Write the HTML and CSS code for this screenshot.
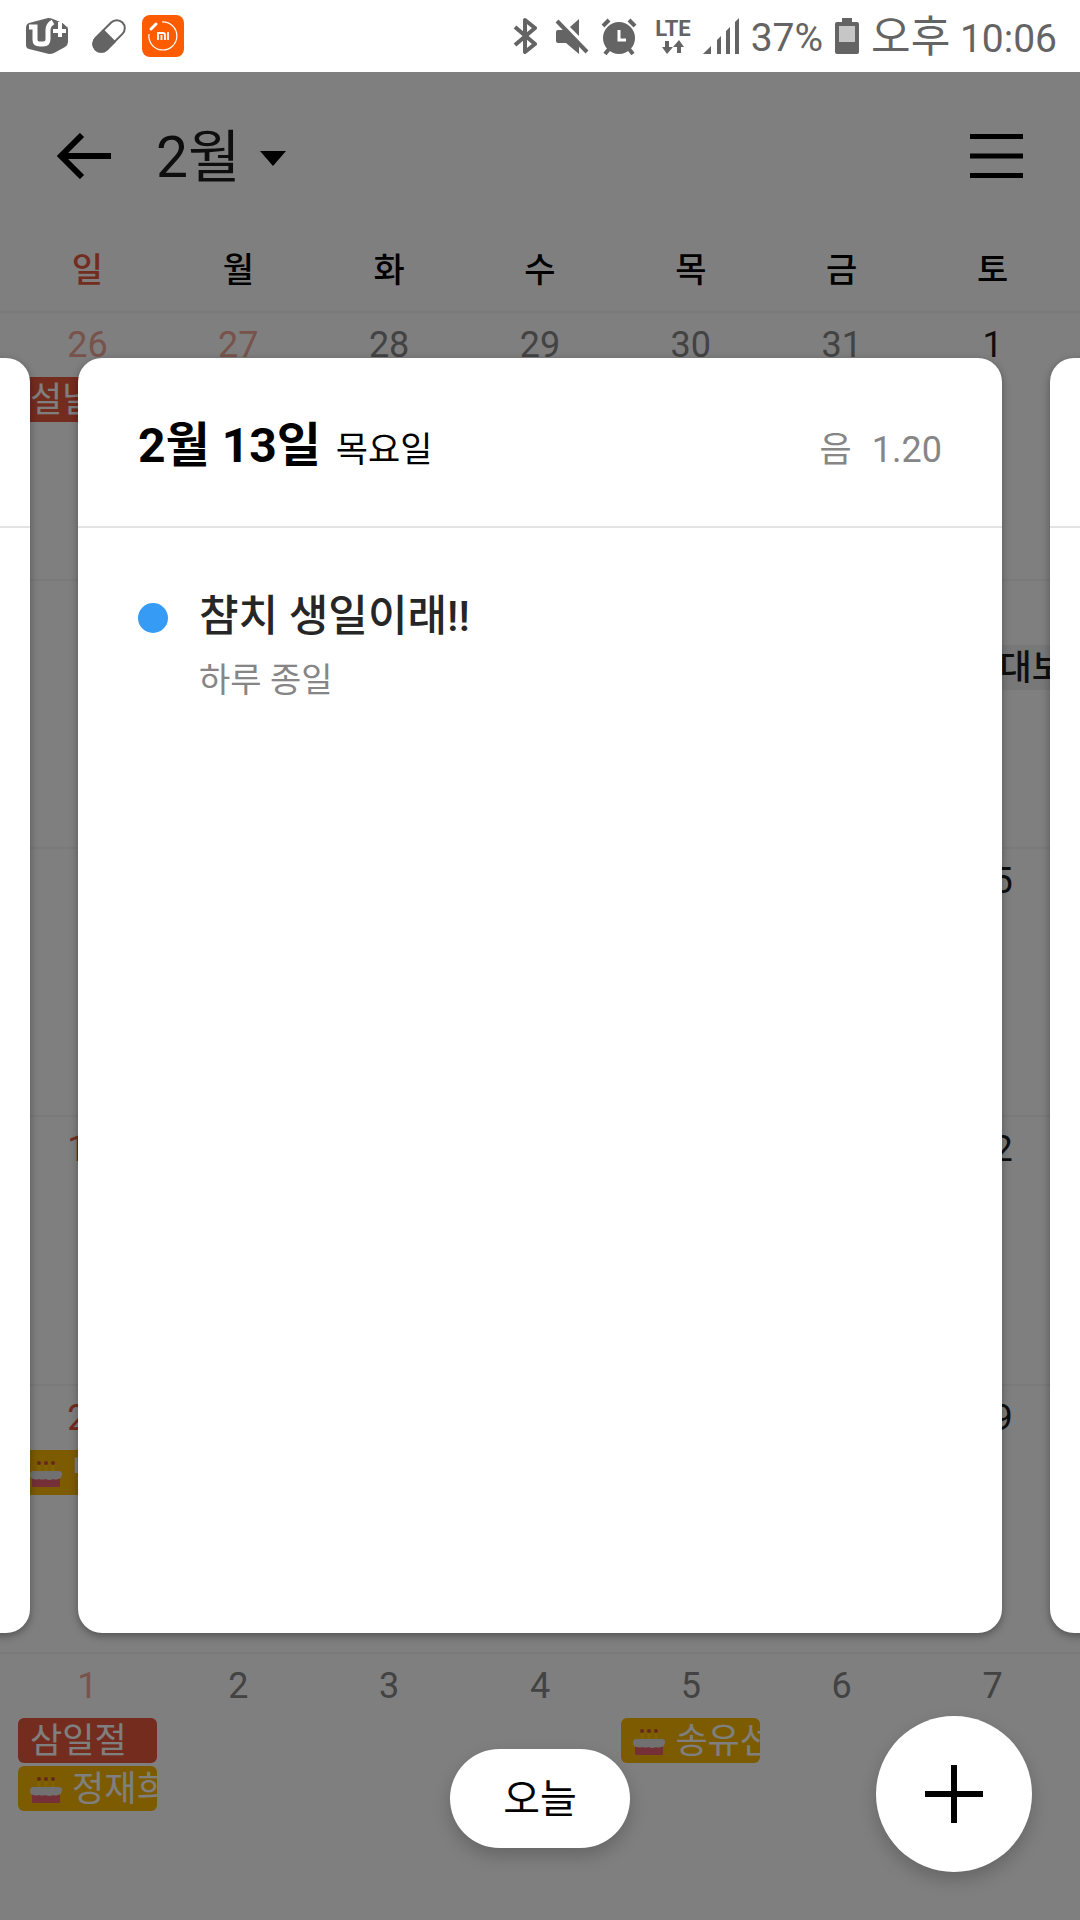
FILE: index.html
```html
<!DOCTYPE html>
<html lang="ko">
<head>
<meta charset="utf-8">
<meta name="viewport" content="width=device-width, initial-scale=1">
<title>캘린더</title>
<link rel="stylesheet" href="styles.css">
</head>
<body>
<svg class="defs" aria-hidden="true">
  <symbol id="cake" viewBox="0 0 32 26">
    <g fill="#c8503c"><circle cx="9" cy="2" r="2"/><circle cx="16" cy="2" r="2"/><circle cx="23" cy="2" r="2"/></g>
    <path d="M9 4v7M16 4v7M23 4v7" stroke="#ffc800" stroke-width="3"/>
    <path d="M2 15h28v10a1 1 0 0 1-1 1H3a1 1 0 0 1-1-1z" fill="#e8606c"/>
    <path d="M3 10h26a3 3 0 0 1 3 4q-1 4-4 4-3 1-5 0-4 2-7 0-4 1-7 0-3 1-5 0-4 0-4-4 0-4 3-4z" fill="#e2e2e2"/>
  </symbol>
</svg>

<header class="status">
  <div class="status-left">
    <svg class="icon-uplus" viewBox="0 0 42 36" aria-label="U+">
      <path d="M3 5L22 0q3 0 5 1l12 5q3 2 3 5v13q0 3-3 5l-11 6q-2 1-5 1L3 31q-3-1-3-4V10q0-4 3-5z" fill="#646464"/>
      <path d="M3 9h6v13q0 4 5 4h3q5 0 5-5V12q0-5 5-8" fill="none" stroke="#fff" stroke-width="5"/>
      <path d="M34 4v15M27 13h13" stroke="#fff" stroke-width="4"/>
      <path d="M33 0l9 8" stroke="#fff" stroke-width="3"/>
    </svg>
    <svg class="icon-pill" viewBox="0 0 36 36" aria-hidden="true">
      <g transform="rotate(45 18 18)">
        <rect x="10" y="-1" width="16" height="38" rx="8" fill="#fff" stroke="#646464" stroke-width="2"/>
        <path d="M9 17h18v12a9 9 0 0 1-18 0z" fill="#646464"/>
      </g>
    </svg>
    <svg class="icon-mi" viewBox="0 0 42 42" aria-label="Mi">
      <rect width="42" height="42" rx="8" fill="#ff5c00"/>
      <path d="M20 7a14 14 0 1 1-13 12" fill="none" stroke="#fff" stroke-width="1.2"/>
      <path d="M9 14l5-5" stroke="#fff" stroke-width="3" stroke-linecap="round"/>
      <path d="M16 25v-7h5q2 0 2 2v5M19.500 20v5M26 17v8" fill="none" stroke="#fff" stroke-width="1.800"/>
    </svg>
  </div>
  <div class="status-right">
    <svg class="icon-bt" viewBox="0 0 24 38" aria-label="블루투스">
      <path d="M2 10l20 17-10 8V3l10 8L2 28" fill="none" stroke="#646464" stroke-width="4" stroke-linejoin="round"/>
    </svg>
    <svg class="icon-mute" viewBox="0 0 34 36" aria-label="음소거">
      <path d="M3 12h6l15 14v10L11 25H3q-2 0-2-2v-9q0-2 2-2z" fill="#646464"/>
      <path d="M24 1v17L15 9z" fill="#646464"/>
      <path d="M2 3l30 31" stroke="#646464" stroke-width="4"/>
    </svg>
    <svg class="icon-alarm" viewBox="0 0 36 37" aria-label="알람">
      <circle cx="18" cy="20" r="16" fill="#646464"/>
      <path d="M2 8l6-6M34 8l-6-6M8 31l-4 5M28 31l4 5" stroke="#646464" stroke-width="4"/>
      <path d="M18 12v10h7" fill="none" stroke="#fff" stroke-width="3"/>
    </svg>
    <span class="lte">LTE
      <svg class="icon-data" viewBox="0 0 22 14" aria-hidden="true">
        <path d="M3 1h4v6h4l-6 7-5-7h3zM15 13h4V7h3L17 0l-6 7h4z" fill="#646464"/>
      </svg>
    </span>
    <svg class="icon-signal" viewBox="0 0 36 36" aria-label="신호">
      <path d="M0 36l8-8v8zM14 22l4-4v18h-4zM23 13l4-4v27h-4zM32 4l4-4v36h-4z" fill="#646464"/>
    </svg>
    <span class="status-text">37%</span>
    <svg class="icon-battery" viewBox="0 0 24 36" aria-label="배터리">
      <path d="M7 0h10v4h5q2 0 2 2v28q0 2-2 2H2q-2 0-2-2V6q0-2 2-2h5z" fill="#646464"/>
      <path d="M4 8h16v16H4z" fill="#c6c6c6"/>
    </svg>
    <time class="status-text"><span class="ampm">오후</span> 10:06</time>
  </div>
</header>

<main class="app">
  <section class="calendar">
    <nav class="toolbar">
      <button class="back" aria-label="뒤로">
        <svg viewBox="0 0 54 46" aria-hidden="true"><path d="M54 23H5M25 2L4 23l21 21" fill="none" stroke="#000" stroke-width="6"/></svg>
      </button>
      <button class="month">2월
        <svg viewBox="0 0 26 15" aria-hidden="true"><path d="M0 0h26L13 15z"/></svg>
      </button>
      <button class="menu" aria-label="메뉴">
        <svg viewBox="0 0 53 44" aria-hidden="true"><path d="M0 2.500h53M0 22h53M0 41.500h53" stroke="#000" stroke-width="5"/></svg>
      </button>
    </nav>
    <table class="grid">
      <thead>
        <tr><th class="sun">일</th><th>월</th><th>화</th><th>수</th><th>목</th><th>금</th><th>토</th></tr>
      </thead>
      <tbody>
        <tr>
          <td class="sun other">26<span class="chip red span3">설날</span></td><td class="sun other">27</td><td class="other">28</td><td class="other">29</td><td class="other">30</td><td class="other">31</td><td>1</td>
        </tr>
        <tr>
          <td class="sun">2</td><td>3</td><td>4</td><td>5</td><td>6</td><td>7</td><td>8<span class="chip plain">정월대보름</span></td>
        </tr>
        <tr>
          <td class="sun">9</td><td>10</td><td>11</td><td>12</td><td>13</td><td>14</td><td>15</td>
        </tr>
        <tr>
          <td class="sun">16</td><td>17</td><td>18</td><td>19</td><td>20</td><td>21</td><td>22</td>
        </tr>
        <tr>
          <td class="sun">23<span class="chip yellow"><svg class="cake" aria-hidden="true"><use href="#cake"/></svg>박</span></td><td>24</td><td>25</td><td>26</td><td>27</td><td>28</td><td>29</td>
        </tr>
        <tr>
          <td class="sun other">1<span class="chip red">삼일절</span><span class="chip yellow"><svg class="cake" aria-hidden="true"><use href="#cake"/></svg>정재희</span></td><td class="other">2</td><td class="other">3</td><td class="other">4</td><td class="other">5<span class="chip yellow"><svg class="cake" aria-hidden="true"><use href="#cake"/></svg>송유선</span></td><td class="other">6</td><td class="other">7</td>
        </tr>
      </tbody>
    </table>
  </section>

  <div class="scrim">
    <div class="pager">
      <article class="card"><header class="card-head"></header></article>
      <article class="card">
        <header class="card-head">
          <h1>2월 13일 <small>목요일</small></h1>
          <p class="lunar"><span class="lunar-label">음</span><span>1.20</span></p>
        </header>
        <div class="event">
          <span class="dot"></span>
          <div>
            <h2>챰치 생일이래!!</h2>
            <p>하루 종일</p>
          </div>
        </div>
      </article>
      <article class="card"><header class="card-head"></header></article>
    </div>
    <button class="today">오늘</button>
    <button class="add" aria-label="일정 추가">
      <svg viewBox="0 0 58 58" aria-hidden="true"><path d="M29 0v58M0 29h58" stroke="#000" stroke-width="6"/></svg>
    </button>
  </div>
</main>
</body>
</html>
```
FILE: styles.css
```css
* {
  box-sizing: border-box;
  margin: 0;
  padding: 0;
}

body {
  display: flex;
  flex-direction: column;
  min-height: 100vh;
  background: #fff;
  color: #1c1c1c;
  font-family: Roboto, "Noto Sans CJK KR", sans-serif;
  font-size: 36px;
  overflow-x: hidden;
}

svg {
  display: block;
  flex: none;
}

button {
  border: 0;
  background: none;
  color: inherit;
  font: inherit;
  cursor: pointer;
}

.defs {
  position: absolute;
  width: 0;
  height: 0;
}

/* Status bar */
.status {
  display: flex;
  align-items: center;
  justify-content: space-between;
  height: 72px;
  padding: 0 23px 0 26px;
  color: #646464;
  font-size: 39px;
  line-height: 48px;
}

.status-left {
  display: flex;
  align-items: center;
  gap: 15px;
}

.status-right {
  display: flex;
  align-items: center;
  gap: 12px;
}

.status-text { padding-top: 4px; }
.ampm { font-size: 43px; }

.icon-uplus { width: 42px; height: 36px; }
.icon-pill { width: 36px; height: 36px; margin-left: 8px; }
.icon-mi { width: 42px; height: 42px; }
.icon-bt { width: 24px; height: 38px; }
.icon-mute { width: 34px; height: 36px; margin-left: 6px; }
.icon-alarm { width: 36px; height: 37px; }
.icon-data { width: 22px; height: 14px; }
.icon-signal { width: 36px; height: 36px; }
.icon-battery { width: 24px; height: 36px; }

.lte {
  display: flex;
  flex-direction: column;
  align-items: center;
  font-size: 22px;
  font-weight: 700;
  line-height: 22px;
  margin-left: 6px;
}

/* Month view */
.app {
  position: relative;
  display: flex;
  flex: 1;
  flex-direction: column;
}

.calendar {
  display: flex;
  flex: 1;
  flex-direction: column;
}

.toolbar {
  display: flex;
  align-items: center;
  height: 168px;
  padding: 0 57px;
}

.back svg { width: 54px; height: 46px; }

.month {
  display: flex;
  align-items: center;
  gap: 20px;
  margin-left: 45px;
  padding-top: 4px;
  font-size: 57px;
  line-height: 64px;
}

.month svg { width: 26px; height: 15px; }
.menu { margin-left: auto; }
.menu svg { width: 53px; height: 44px; }

.grid {
  display: flex;
  flex: 1;
  flex-direction: column;
}

.grid tbody {
  display: grid;
  flex: 1;
  grid-template-rows: repeat(6, minmax(160px, 1fr));
}

.grid tr {
  display: grid;
  grid-template-columns: repeat(7, minmax(0, 1fr));
  padding: 0 12px;
}

.grid th {
  height: 71px;
  color: #000;
  font-weight: 500;
  font-size: 34px;
  line-height: 60px;
  text-align: center;
}

.grid tbody tr {
  border-top: 2px solid #f4f4f4;
}

.grid td {
  display: flex;
  flex-direction: column;
  gap: 3px;
  padding: 6px 6px 0;
  line-height: 52px;
  text-align: center;
}

.grid .other { color: #868686; }
.grid .sun { color: #e8583c; }
.grid .sun.other { color: #f0a696; }

.chip {
  display: flex;
  align-items: center;
  gap: 10px;
  height: 45px;
  padding: 3px 0 0 12px;
  border-radius: 6px;
  color: #fff;
  font-size: 35px;
  line-height: 42px;
  white-space: nowrap;
  overflow: hidden;
}

.chip:first-of-type { margin-top: 3px; }

.red { background: #e8583c; }
.yellow { background: #fab600; }
.plain { background: #f0f0f0; color: #1c1c1c; font-weight: 500; }
.span3 { width: 440px; }
.cake { width: 32px; height: 26px; }

/* Day cards over the dimmed month */
.scrim {
  position: absolute;
  inset: 0;
  padding: 286px 0 287px;
  background: rgba(0, 0, 0, 0.5);
  overflow: hidden;
}

.pager {
  display: flex;
  justify-content: center;
  gap: 48px;
  height: 100%;
}

.card {
  flex: 0 0 calc(100% - 156px);
  border-radius: 24px;
  background: #fff;
  box-shadow: 0 3px 9px rgba(0, 0, 0, 0.35);
}

.card-head {
  display: flex;
  align-items: baseline;
  justify-content: space-between;
  height: 170px;
  padding: 56px 60px 0;
  border-bottom: 2px solid #e4e4e4;
  line-height: 64px;
}

h1 {
  color: #000;
  font-size: 48px;
  font-weight: 700;
}

h1 small {
  margin-left: 3px;
  font-size: 35px;
  font-weight: 400;
}

.lunar {
  display: flex;
  align-items: baseline;
  gap: 20px;
  color: #868686;
}

.lunar-label { font-size: 35px; }

.event {
  display: flex;
  gap: 31px;
  padding: 56px 60px;
}

.dot {
  flex: none;
  width: 30px;
  height: 30px;
  margin-top: 19px;
  border-radius: 50%;
  background: #359bf5;
}

.event h2 {
  color: #262626;
  font-size: 43px;
  font-weight: 500;
  line-height: 64px;
}

.event p {
  color: #868686;
  font-size: 34px;
  line-height: 64px;
}

.today,
.add {
  position: absolute;
  background: #fff;
  color: #000;
  box-shadow: 0 8px 18px rgba(0, 0, 0, 0.2);
}

.today {
  bottom: 72px;
  left: calc(50% - 90px);
  width: 180px;
  height: 99px;
  padding-bottom: 6px;
  border-radius: 50px;
  font-size: 40px;
}

.add {
  right: 48px;
  bottom: 48px;
  display: grid;
  place-items: center;
  width: 156px;
  height: 156px;
  border-radius: 50%;
}

.add svg { width: 58px; height: 58px; }
```
